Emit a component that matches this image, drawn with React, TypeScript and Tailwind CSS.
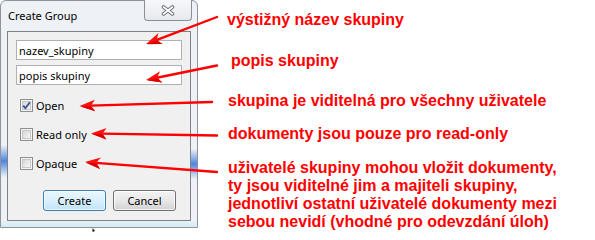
import React from "react";

const UI = { fontFamily: '"Noto Sans", "Open Sans", Arial, sans-serif' };
const RED = { fontFamily: '"Liberation Sans", Arial, sans-serif' };

function Arrow({ tx, ty, ex, ey }: { tx: number; ty: number; ex: number; ey: number }) {
  const ang = (Math.atan2(ey - ty, ex - tx) * 180) / Math.PI;
  const len = Math.hypot(ex - tx, ey - ty);
  return (
    <g transform={`translate(${tx} ${ty}) rotate(${ang})`}>
      <line x1={11} y1={0} x2={len} y2={0} stroke="#ff0000" strokeWidth={2.4} strokeLinecap="round" />
      <path d="M0 0 L15.5 -5.8 L11.5 0 L15.5 5.8 Z" fill="#ff1010" />
      <path d="M1 0.6 L15.5 5.8 L11.5 0.6 Z" fill="#d80000" />
    </g>
  );
}

function CheckBox({ checked }: { checked?: boolean }) {
  return (
    <div className="relative w-[13px] h-[13px] border border-[#8e8f8f] bg-[#f4f4f4] flex items-center justify-center shrink-0">
      <div className="w-[9px] h-[9px] border border-[#c6c8cc] bg-linear-to-br from-[#d4d7db] to-[#f7f7f7]" />
      {checked && (
        <svg className="absolute left-0 top-0" width="11" height="11" viewBox="0 0 11 11">
          <path d="M2.2 5.6 L4.4 8.2 L8.9 2.2" fill="none" stroke="#3d5596" strokeWidth="1.9" strokeLinejoin="round" />
        </svg>
      )}
    </div>
  );
}

function Option({ label, checked }: { label: string; checked?: boolean }) {
  return (
    <div className="flex items-center ml-[4px] h-[13px]">
      <CheckBox checked={checked} />
      <span className="ml-[3px] text-[11px] leading-[15px] text-black">{label}</span>
    </div>
  );
}

function Dialog() {
  return (
    <div
      className="w-[198px] h-[228px] shrink-0 flex flex-col border border-[#8f949b] rounded-t-[6px] bg-[#eef1f5]"
      style={UI}
    >
      {/* title bar */}
      <div className="h-[30px] flex items-start">
        <div className="pl-[7px] pt-[7px] text-[11px] leading-[15px] text-black">Create Group</div>
        <div className="ml-auto mr-[5px] -mt-px w-[48px] h-[21px] border-x border-b border-[#8c9096] rounded-b-[4px] bg-linear-to-b from-[#f7f8fa] to-[#e6e9ee] flex items-center justify-center">
          <svg width="14" height="11" viewBox="0 0 14 11">
            <path d="M2.5 2 L11.5 9 M11.5 2 L2.5 9" stroke="#6f747b" strokeWidth="3.6" strokeLinecap="round" />
            <path d="M2.5 2 L11.5 9 M11.5 2 L2.5 9" stroke="#ffffff" strokeWidth="1.6" strokeLinecap="round" />
          </svg>
        </div>
      </div>
      {/* middle */}
      <div className="flex h-[190px]">
        <div className="w-[6px] flex flex-col">
          <div className="h-[114px]" />
          <div className="h-[32px] bg-linear-to-b from-transparent via-[#4f86df] to-transparent" />
        </div>
        <div className="w-[184px] border border-[#7f8388] bg-[#f0f0f0] flex flex-col px-[8px] pt-[8px]">
          <div className="h-[20px] border border-[#adb0b5] bg-white flex items-center pl-[2px] text-[11px] leading-[15px] text-black">
            nazev_skupiny
          </div>
          <div className="mt-[5px] h-[20px] border border-[#adb0b5] bg-white flex items-center pl-[2px] text-[11px] leading-[15px] text-black">
            popis skupiny
          </div>
          <div className="mt-[14px] flex flex-col gap-[16px]">
            <Option label="Open" checked />
            <Option label="Read only" />
            <Option label="Opaque" />
          </div>
          <div className="mt-[20px] flex justify-end gap-[7px] mr-[6px]">
            <div className="w-[63px] h-[21px] rounded-[3px] border border-[#3c7fb1] bg-linear-to-b from-[#eaf6fd] via-[#d9f0fc] to-[#bfe3f6] flex items-center justify-center text-[11px] leading-[15px] text-black shadow-[inset_0_0_0_1px_rgba(255,255,255,0.7)]">
              Create
            </div>
            <div className="w-[63px] h-[21px] rounded-[3px] border border-[#707070] bg-linear-to-b from-[#f3f3f3] via-[#e8e8e8] to-[#d2d2d2] flex items-center justify-center text-[11px] leading-[15px] text-black shadow-[inset_0_0_0_1px_rgba(255,255,255,0.8)]">
              Cancel
            </div>
          </div>
        </div>
        <div className="w-[6px] flex flex-col">
          <div className="h-[118px]" />
          <div className="h-[30px] bg-linear-to-b from-transparent via-[#4f86df] to-transparent" />
        </div>
      </div>
      {/* bottom strip */}
      <div className="flex-1 bg-linear-to-b from-[#e6f1f6] to-[#d5ebf3]" />
    </div>
  );
}

export default function App() {
  return (
    <div className="relative w-[595px] h-[232px] overflow-hidden bg-white flex">
      <Dialog />
      <div
        className="ml-[29px] flex flex-col text-[16px] leading-[18px] font-bold text-[#ff0000] whitespace-nowrap"
        style={RED}
      >
        <div className="mt-[11px]">výstižný název skupiny</div>
        <div className="mt-[23px] ml-[4px]">popis skupiny</div>
        <div className="mt-[22px] ml-[1px]">skupina je viditelná pro všechny uživatele</div>
        <div className="mt-[15px] ml-[1px]">dokumenty jsou pouze pro read-only</div>
        <div className="mt-[16px] ml-[1px]">
          <div>uživatelé skupiny mohou vložit dokumenty,</div>
          <div>ty jsou viditelné jim a majiteli skupiny,</div>
          <div>jednotliví ostatní uživatelé dokumenty mezi</div>
          <div>sebou nevidí (vhodné pro odevzdání úloh)</div>
        </div>
      </div>
      <svg className="absolute left-0 top-0 pointer-events-none" width="595" height="232" viewBox="0 0 595 232">
        <Arrow tx={146} ty={44} ex={217} ey={17} />
        <Arrow tx={146} ty={80} ex={217} ey={65.5} />
        <Arrow tx={79.5} ty={106} ex={212} ey={102} />
        <Arrow tx={91} ty={133.5} ex={217} ey={135.5} />
        <Arrow tx={85} ty={162} ex={217} ey={172} />
        <path d="M92.5 228 L92.5 232 L95 231 Z" fill="#111" />
      </svg>
    </div>
  );
}
